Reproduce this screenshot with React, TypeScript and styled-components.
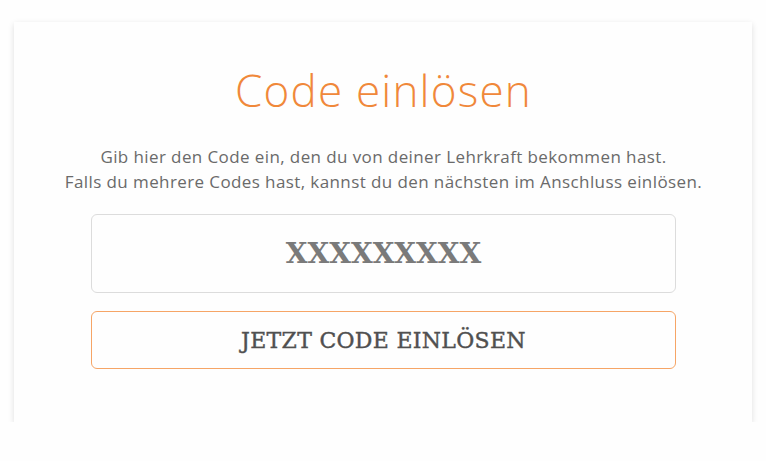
import styled, { createGlobalStyle } from 'styled-components';

const GlobalStyle = createGlobalStyle`
  html, body {
    margin: 0;
    padding: 0;
    background: #fefefe;
  }
`;

const Page = styled.div`
  padding: 22px 14px 0 14px;
  width: 766px;
  box-sizing: border-box;
`;

const Card = styled.div`
  background: #fefefe;
  box-shadow: 0 2px 6px rgba(0, 0, 0, 0.13);
  height: 400px;
  box-sizing: border-box;
  padding: 39px 76px 0 77px;
  display: flex;
  flex-direction: column;
  align-items: center;
`;

const Title = styled.h1`
  margin: 0;
  font-family: 'Open Sans', 'Lato', sans-serif;
  font-weight: 300;
  font-size: 44px;
  letter-spacing: 1.2px;
  line-height: 58px;
  color: #f0883a;
`;

const Intro = styled.p`
  margin: 25px 0 0 0;
  font-family: 'Open Sans', 'Lato', sans-serif;
  font-size: 17px;
  letter-spacing: 0.4px;
  line-height: 25px;
  color: #6a6a6a;
  text-align: center;
  white-space: nowrap;
`;

const CodeInput = styled.input`
  margin-top: 20px;
  width: 100%;
  height: 79px;
  box-sizing: border-box;
  border: 1px solid #dcdcdc;
  border-radius: 6px;
  background: #fefefe;
  text-align: center;
  font-family: 'DejaVu Serif', serif;
  font-weight: bold;
  font-size: 28px;
  color: #777;
  outline: none;

  &::placeholder {
    color: #7a7a7a;
  }
`;

const SubmitButton = styled.button`
  margin-top: 18px;
  width: 100%;
  height: 58px;
  box-sizing: border-box;
  border: 1px solid #f6a566;
  border-radius: 6px;
  background: #fefefe;
  font-family: 'DejaVu Serif', serif;
  font-size: 22px;
  letter-spacing: 0.3px;
  -webkit-text-stroke: 0.4px #505050;
  color: #505050;
  cursor: pointer;
`;

function App() {
  return (
    <>
      <GlobalStyle />
      <Page>
        <Card>
          <Title>Code einlösen</Title>
          <Intro>
            Gib hier den Code ein, den du von deiner Lehrkraft bekommen hast.
            <br />
            Falls du mehrere Codes hast, kannst du den nächsten im Anschluss einlösen.
          </Intro>
          <CodeInput placeholder="XXXXXXXXX" />
          <SubmitButton>JETZT CODE EINLÖSEN</SubmitButton>
        </Card>
      </Page>
    </>
  );
}

export default App;
